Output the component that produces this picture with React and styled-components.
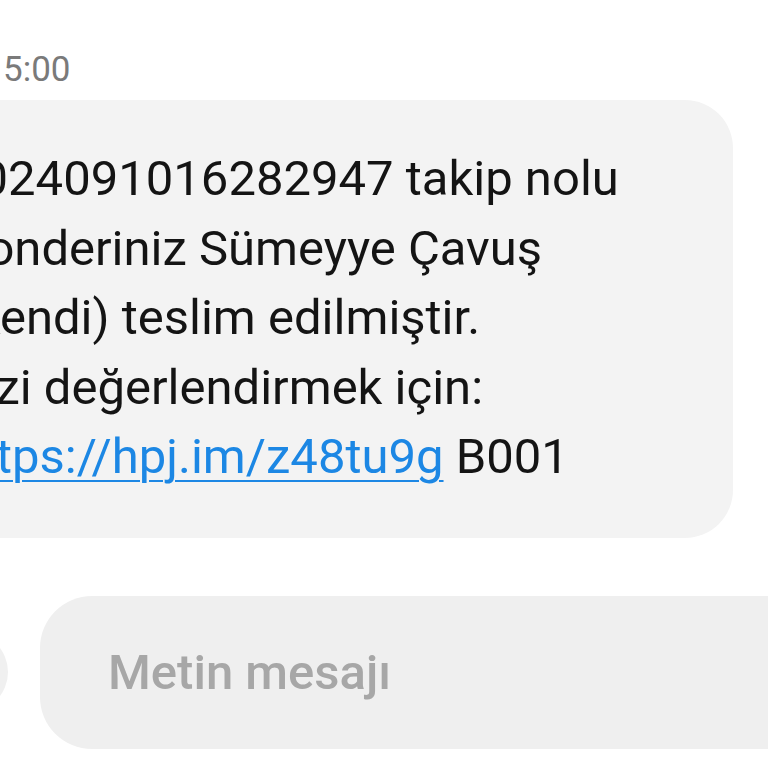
import React from "react";
import styled, { createGlobalStyle } from "styled-components";

const GlobalStyle = createGlobalStyle`
  html, body {
    margin: 0;
    padding: 0;
    background: #ffffff;
    overflow: hidden;
  }
  body {
    font-family: Roboto, "Noto Sans", "Liberation Sans", sans-serif;
  }
`;

const Screen = styled.div`
  width: 768px;
  height: 768px;
  overflow: hidden;
  display: flex;
  flex-direction: column;
`;

const TimeStamp = styled.div`
  margin-top: 50px;
  padding-left: 3px;
  font-size: 35px;
  line-height: 40px;
  color: #7a7a7a;
`;

const Thread = styled.div`
  margin-left: -87px;
  margin-top: 10px;
  display: flex;
  flex-direction: column;
`;

const Bubble = styled.div`
  box-sizing: border-box;
  width: 820px;
  padding: 44px 40px 46px 40px;
  background: #f3f3f3;
  border-radius: 48px;
  font-size: 49px;
  line-height: 69.5px;
  color: #141414;
`;

const LinkText = styled.a`
  color: #1c87e4;
  text-decoration: underline;
  text-decoration-thickness: 2px;
  text-underline-offset: 7px;
`;

const Composer = styled.div`
  display: flex;
  align-items: center;
  gap: 32px;
  margin-top: 58px;
  margin-left: -72px;
`;

const RoundButton = styled.div`
  flex: none;
  width: 80px;
  height: 80px;
  border-radius: 50%;
  background: #f0f0f0;
`;

const InputBox = styled.div`
  flex: none;
  box-sizing: border-box;
  width: 820px;
  height: 153px;
  display: flex;
  align-items: center;
  padding-left: 68px;
  background: #efefef;
  border-radius: 52px;
`;

const Placeholder = styled.span`
  font-size: 49px;
  font-weight: 500;
  color: #a7a7a7;
`;

export default function App() {
  return (
    <Screen>
      <GlobalStyle />
      <TimeStamp>5:00</TimeStamp>
      <Thread>
        <Bubble>
          2024091016282947 takip nolu
          <br />
          Gonderiniz Sümeyye Çavuş
          <br />
          (Kendi) teslim edilmiştir.
          <br />
          Bizi değerlendirmek için:
          <br />
          <LinkText href="#">https://hpj.im/z48tu9g</LinkText> B001
        </Bubble>
      </Thread>
      <Composer>
        <RoundButton />
        <InputBox>
          <Placeholder>Metin mesajı</Placeholder>
        </InputBox>
      </Composer>
    </Screen>
  );
}
